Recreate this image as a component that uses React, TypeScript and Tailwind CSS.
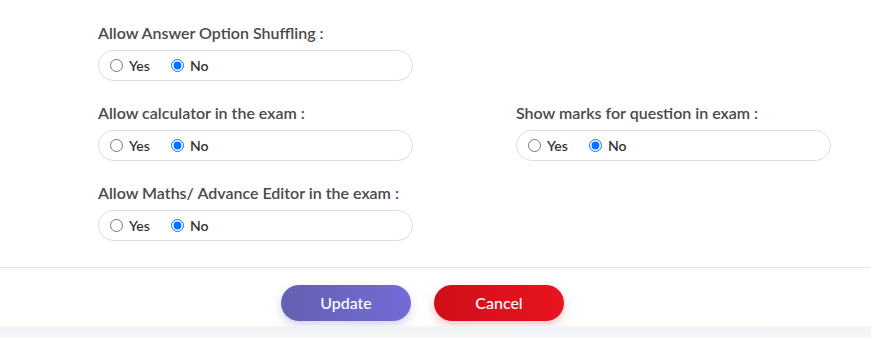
import React from 'react'

interface OptionFieldProps {
  label: string
  name: string
}

const OptionField: React.FC<OptionFieldProps> = ({ label, name }) => (
  <div className="flex flex-col">
    <label className="text-[16px] font-semibold leading-[20px] text-[#4a4a4a]">{label}</label>
    <div className="mt-[7px] flex h-[31px] w-[315px] items-center gap-[21px] rounded-full border border-[#dcdcdc] bg-white pl-[11px]">
      <label className="flex items-center gap-[6px] text-[14px] font-semibold text-[#333]">
        <input type="radio" name={name} className="m-0 h-[13px] w-[13px]" readOnly />
        Yes
      </label>
      <label className="flex items-center gap-[6px] text-[14px] font-semibold text-[#333]">
        <input type="radio" name={name} defaultChecked className="m-0 h-[13px] w-[13px]" />
        No
      </label>
    </div>
  </div>
)

const App: React.FC = () => (
  <div className="flex h-[338px] w-full flex-col bg-white font-['Lato',sans-serif]">
    <div className="grid grid-cols-[315px_315px] gap-x-[103px] gap-y-[22px] pl-[98px] pt-[23px]">
      <OptionField label="Allow Answer Option Shuffling :" name="shuffle" />
      <div />
      <OptionField label="Allow calculator in the exam :" name="calc" />
      <OptionField label="Show marks for question in exam :" name="marks" />
      <OptionField label="Allow Maths/ Advance Editor in the exam :" name="editor" />
    </div>
    <div className="mt-[26px] border-t border-[#e2e2e2]" />
    <div className="flex gap-[23px] pl-[281px] pt-[17px]">
      <button className="h-[36px] w-[130px] rounded-full bg-gradient-to-r from-[#6460b2] to-[#736cd6] text-[16px] font-medium text-white shadow-[0_4px_10px_rgba(115,108,214,0.3)]">
        Update
      </button>
      <button className="h-[36px] w-[130px] rounded-full bg-gradient-to-r from-[#cf0f1b] to-[#e9141f] text-[16px] font-medium text-white shadow-[0_4px_10px_rgba(233,20,31,0.25)]">
        Cancel
      </button>
    </div>
    <div className="mt-auto h-[12px] bg-gradient-to-b from-[#f1f2f5] to-[#f6f7f9]" />
  </div>
)

export default App
